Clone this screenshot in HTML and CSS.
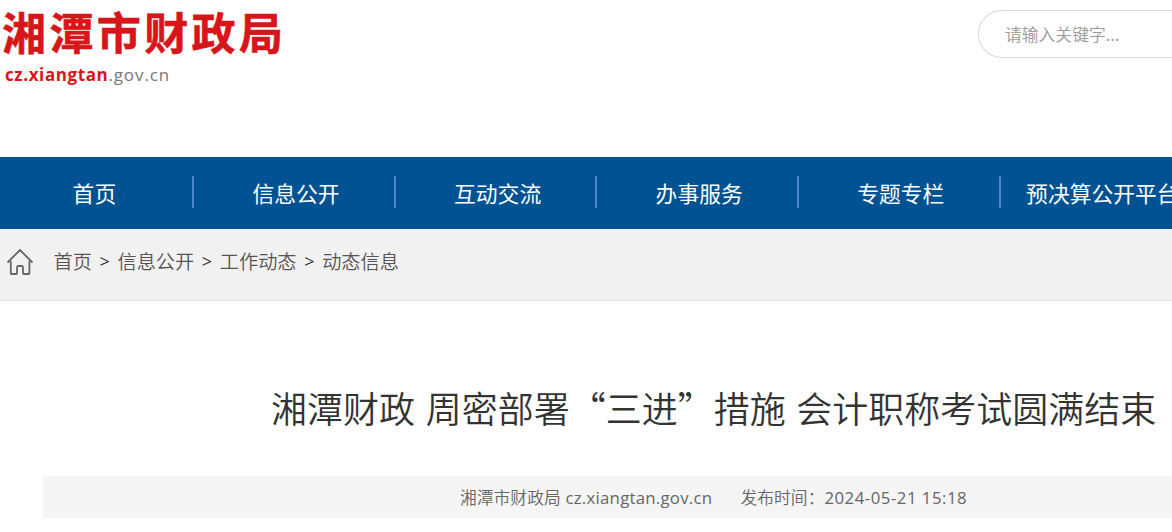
FILE: index.html
```
<!DOCTYPE html>
<html lang="zh-CN">
<head>
    <meta charset="UTF-8">
    <meta name="viewport" content="width=device-width, initial-scale=1.0">
    <title>湘潭市财政局</title>
    <link rel="stylesheet" href="styles.css">
</head>
<body>
    <div class="header">
        <div class="logo">
            <h1>湘潭市财政局</h1>
            <p><b>cz.xiangtan</b><span>.gov.cn</span></p>
        </div>
        <div class="search">请输入关键字...</div>
    </div>
    <ul class="nav">
        <li>首页</li>
        <li>信息公开</li>
        <li>互动交流</li>
        <li>办事服务</li>
        <li>专题专栏</li>
        <li>预决算公开平台</li>
    </ul>
    <div class="position">
        <svg class="home" width="28" height="28" viewBox="0 0 28 28">
            <path d="M1.5 14.5 L14 2 L26.5 14.5 M4.8 13 V25.5 Q4.8 26 5.3 26 H10.3 Q11 26 11 25.3 V19.5 Q11 18 12.5 18 H15.5 Q17 18 17 19.5 V25.3 Q17 26 17.7 26 H22.7 Q23.4 26 23.4 25.5 V13"/>
        </svg>
        <a>首页</a><i>&gt;</i><a>信息公开</a><i>&gt;</i><a>工作动态</a><i>&gt;</i><a>动态信息</a>
    </div>
    <div class="article">
        <h2>湘潭财政 周密部署“三进”措施 会计职称考试圆满结束</h2>
        <div class="info">
            <span class="from">湘潭市财政局 <em class="site">cz.xiangtan.gov.cn</em></span>
            <span class="time">发布时间：<em class="date">2024-05-21 15:18</em></span>
        </div>
    </div>
</body>
</html>
```

FILE: styles.css
```
* { margin: 0; padding: 0; box-sizing: border-box; }
li { list-style: none; }
i, em { font-style: normal; }
body {
    width: 100%;
    height: 532px;
    overflow: hidden;
    background: #fff;
    font-family: "Noto Sans CJK SC", sans-serif;
    font-weight: 350;
    white-space: nowrap;
}
/* header */
.header {
    height: 157px;
    display: flex;
    justify-content: space-between;
    align-items: flex-start;
}
.logo {
    padding: 2px 0 0 2px;
}
.logo h1 {
    height: 61px;
    line-height: 58px;
    font-size: 44px;
    font-weight: 700;
    letter-spacing: 3.4px;
    color: #d7161b;
    -webkit-text-stroke: 0.6px #d7161b;
}
.logo p {
    padding-left: 3px;
    line-height: 23px;
    font-family: "Open Sans", "Noto Sans", sans-serif;
    font-size: 17px;
    font-weight: 400;
    letter-spacing: 0.9px;
    color: #777;
}
.logo b {
    font-weight: 700;
    letter-spacing: 0.6px;
    color: #d7161b;
}
.search {
    width: 194px;
    height: 48px;
    margin-top: 10px;
    padding-left: 26px;
    border: 1px solid #d8d8d8;
    border-right: 0;
    border-radius: 24px 0 0 24px;
    line-height: 47px;
    font-size: 16.8px;
    color: #999;
}
/* nav */
.nav {
    height: 72px;
    margin-left: -7.4px;
    padding-top: 19px;
    display: flex;
    background: #005293;
}
.nav li {
    flex: none;
    width: 201.6px;
    height: 32px;
    padding-left: 4px;
    border-right: 2px solid #4f86d2;
    line-height: 33px;
    text-align: center;
    font-size: 21.8px;
    font-weight: 400;
    color: #fff;
}
.nav li:last-child {
    padding-left: 2px;
    border-right: 0;
}
/* breadcrumb */
.position {
    height: 72px;
    padding-left: 6px;
    display: flex;
    background: #f1f1f1;
    border-bottom: 1px solid #ddd;
    line-height: 64px;
    font-size: 19.2px;
    color: #555;
}
.home {
    margin: 19px 19.5px 0 0;
    fill: none;
    stroke: #666;
    stroke-width: 1.8;
}
.position i {
    width: 25.6px;
    text-align: center;
    font-family: "Open Sans", sans-serif;
    font-size: 18px;
    font-weight: 400;
    color: #333;
}
/* article */
.article {
    padding-left: 43px;
}
.article h2 {
    height: 175px;
    padding-left: 228px;
    line-height: 212px;
    font-size: 36px;
    font-weight: 350;
    word-spacing: 2.6px;
    color: #333;
}
.info {
    height: 42px;
    padding-left: 417px;
    display: flex;
    background: #f5f5f5;
    line-height: 43px;
    font-size: 16.8px;
    color: #666;
}
.from {
    width: 280.5px;
    word-spacing: 1px;
}
.info em {
    font-family: "Open Sans", "Noto Sans", sans-serif;
    font-weight: 400;
}
.site {
    letter-spacing: 0.25px;
}
.date {
    letter-spacing: 0.5px;
}
```
